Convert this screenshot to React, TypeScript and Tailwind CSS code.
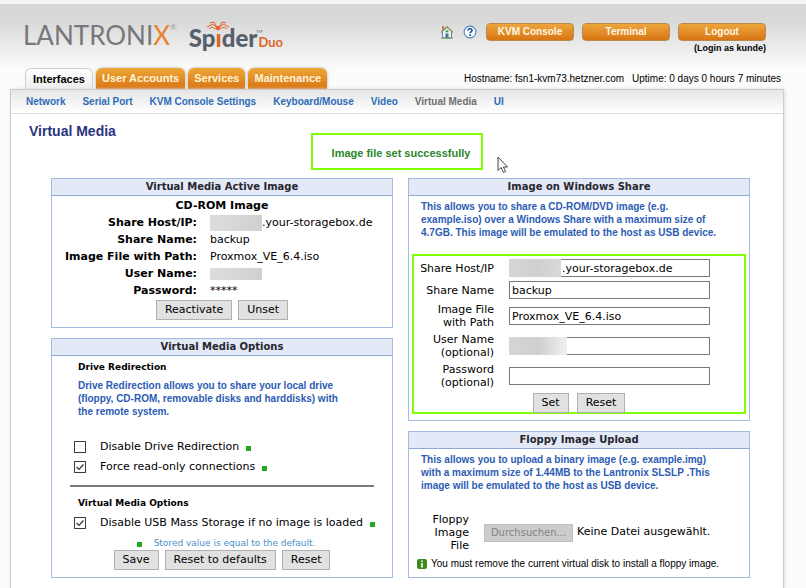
import type { ReactNode } from "react";

const verdana = "font-['DejaVu_Sans',Verdana,sans-serif]";
const arial = "font-['Liberation_Sans',Arial,sans-serif]";

function Logo() {
  return (
    <div className="flex items-start font-['Lato',sans-serif]">
      <div className="flex items-start text-[26px] leading-[34px] text-[#77787b]">
        <span>
          LANTRONI<span className="text-[#e8832a]">X</span>
        </span>
        <span className="text-[8px] leading-[18px] text-[#999999]">®</span>
      </div>
      <div className="relative ml-3 flex items-start pt-1">
        <span className="text-[24px] leading-8 font-black text-[#55606a]">
          Sp<span className="text-[#e2642a]">ı</span>der
        </span>
        <span className="-ml-px text-[4px] leading-[20px] text-[#55606a]">TM</span>
        <span className="-ml-1 pt-[13px] text-[13px] leading-[14px] font-bold text-[#e2642a]">Duo</span>
        <svg className="absolute top-[3px] left-[17px]" width="24" height="13" viewBox="0 0 24 13" fill="none" stroke="#e2642a" strokeWidth="1">
          <path d="M11 7 L7 3 L1 6 M11 7 L8 1 L4 2 M13 7 L17 3 L23 6 M13 7 L16 1 L20 2 M10 8 L6 6 L3 8 M14 8 L18 6 L21 8" />
          <ellipse cx="12" cy="7" rx="2" ry="2.5" fill="#e2642a" stroke="none" />
        </svg>
      </div>
    </div>
  );
}

function HomeIcon() {
  return (
    <svg width="14" height="14" viewBox="0 0 14 14" aria-hidden="true">
      <rect x="2" y="1" width="2" height="5" fill="#b08a5a" />
      <path d="M2.5 6.5 V13 H11.5 V6.5 L7 2.5 Z" fill="#eef3fa" stroke="#6f86a3" />
      <path d="M1 7.5 L7 1.5 L13 7.5" fill="none" stroke="#a08d5d" strokeWidth="1.2" />
      <rect x="5.7" y="5.3" width="2.6" height="2" fill="#3d9a4a" />
      <rect x="5.5" y="8.5" width="3" height="4.5" fill="#55708f" />
      <rect x="1" y="12.5" width="12" height="1" fill="#6d8f63" />
    </svg>
  );
}

function HelpIcon() {
  return (
    <svg width="14" height="14" viewBox="0 0 14 14" aria-hidden="true">
      <circle cx="7" cy="7" r="5.9" fill="#fff" stroke="#4e83bd" strokeWidth="1.1" />
      <path d="M5 5.6 C5 3.2 9 3.2 9 5.4 C9 6.9 7.1 6.8 7.1 8.3" fill="none" stroke="#1f4f96" strokeWidth="1.6" />
      <rect x="6.3" y="9.2" width="1.7" height="1.7" fill="#1f4f96" />
    </svg>
  );
}

function HeaderButton({ children }: { children: ReactNode }) {
  return (
    <button className="h-[18px] w-[88px] rounded border border-[#b88a4c] bg-gradient-to-b from-[#eda63a] to-[#d87512] text-[10px] leading-4 font-bold text-[#fff6e4]">
      {children}
    </button>
  );
}

function Tab({ children, active }: { children: ReactNode; active?: boolean }) {
  return (
    <a
      href="#"
      className={
        active
          ? "flex h-[22px] items-center rounded-t-md border-x border-t border-[#cfcfcf] bg-gradient-to-b from-white to-[#ececec] px-[7px] text-black"
          : "flex h-[21px] items-center rounded-t-md bg-gradient-to-b from-[#eca735] to-[#d97412] px-1.5 text-[#fff3dc] shadow-[0_0_3px_#aaaaaa]"
      }
    >
      {children}
    </a>
  );
}

function Panel({ title, children }: { title: string; children: ReactNode }) {
  return (
    <section className="border border-[#a3bbe0] bg-white">
      <h2 className={`border-b border-[#8ea9d4] bg-[#e4e9f7] text-center text-[10px] leading-4 font-bold text-[#26262e] ${verdana}`}>{title}</h2>
      {children}
    </section>
  );
}

function Hint({ children }: { children: ReactNode }) {
  return <p className={`text-[10px] leading-[13px] font-bold text-[#2c5cb4] ${arial}`}>{children}</p>;
}

function GreyButton({ children }: { children: ReactNode }) {
  return <button className="h-5 border border-[#b0b0b0] bg-[#e1e1e1] px-2 text-[11px] leading-4 text-black">{children}</button>;
}

function Dot() {
  return <span className="mt-0.5 inline-block size-[5px] bg-[#1fab1f]" />;
}

function Check({ id, label, checked }: { id: string; label: string; checked?: boolean }) {
  return (
    <div className="flex h-5 items-center">
      <span className="relative flex size-3">
        <input id={id} type="checkbox" defaultChecked={checked} className="peer size-3 appearance-none border border-[#3c3c3c] bg-white" />
        <svg className="pointer-events-none absolute inset-0 hidden peer-checked:block" width="12" height="12" viewBox="0 0 12 12" fill="none" stroke="#333333" strokeWidth="1.2">
          <path d="M2.5 6 L5 8.5 L9.5 3.5" />
        </svg>
      </span>
      <label htmlFor={id} className="mr-[7px] ml-3.5 text-[11px]">
        {label}
      </label>
      <Dot />
    </div>
  );
}

function InfoRow({ label, children }: { label: string; children: ReactNode }) {
  return (
    <tr>
      <th scope="row" className="w-[145px] p-0 text-right font-bold">
        {label}
      </th>
      <td className="py-0 pr-0 pl-[13px]">{children}</td>
    </tr>
  );
}

function Field({ id, label, value, masked, tall, type = "text" }: { id: string; label: ReactNode; value?: string; masked?: boolean; tall?: boolean; type?: string }) {
  return (
    <div className={`flex items-center ${tall ? "h-[30px]" : "h-[22px]"}`}>
      <label htmlFor={id} className="w-20 text-right text-[11px] leading-[13px]">
        {label}
      </label>
      <span className="relative mr-[34px] ml-[15px] flex flex-1">
        <input
          id={id}
          type={type}
          defaultValue={value}
          className={`h-[18px] w-full min-w-0 border border-[#7a7a7a] bg-white pr-1 text-[11px] text-black ${masked ? "pl-[52px]" : "pl-0.5"}`}
        />
        {masked && <span className={`absolute inset-y-0 left-0 bg-gradient-to-r from-[#d6d6d6] via-[#cfcfcf] ${value ? "w-[52px] to-[#d8d8d8]" : "w-[58px] to-[#f0f0f0]"}`} />}
      </span>
    </div>
  );
}

export default function App() {
  return (
    <div className={`min-h-screen overflow-hidden bg-[#fbfbfb] text-black ${arial}`}>
      <div className="h-1 bg-[#f6f6f6]" />
      <header className="bg-gradient-to-b from-[#d8d8d8] from-25% to-[#fbfbfb] pr-[40px] pl-[23px]">
        <div className="flex h-16 items-start justify-between">
          <div className="pt-[14px]">
            <Logo />
          </div>
          <div className="pt-[19px]">
            <div className="flex items-center">
              <a href="#" aria-label="Home">
                <HomeIcon />
              </a>
              <a href="#" aria-label="Help" className="mx-[9px]">
                <HelpIcon />
              </a>
              <div className="flex gap-2">
                <HeaderButton>KVM Console</HeaderButton>
                <HeaderButton>Terminal</HeaderButton>
                <HeaderButton>Logout</HeaderButton>
              </div>
            </div>
            <p className="text-right text-[9px] leading-[14px] font-bold">(Login as kunde)</p>
          </div>
        </div>
      </header>

      <div className="mr-[22px] ml-[10px]">
        <div className="flex items-end justify-between pr-[3px] pl-[15px]">
          <nav className="relative -mb-px flex items-start gap-[3px] text-[11px] font-bold">
            <Tab active>Interfaces</Tab>
            <Tab>User Accounts</Tab>
            <Tab>Services</Tab>
            <Tab>Maintenance</Tab>
          </nav>
          <p className="flex gap-2 text-[10px] leading-5">
            <span>Hostname: fsn1-kvm73.hetzner.com</span>
            <span>Uptime: 0 days 0 hours 7 minutes</span>
          </p>
        </div>

        <main className="relative min-h-[500px] border border-[#cccccc] bg-white shadow-[1px_0_3px_#dddddd]">
          <nav className="flex h-6 items-center gap-[17px] border-b border-[#dcdcdc] bg-gradient-to-b from-[#e6e6e6] to-white px-[15px] text-[10px] font-bold text-[#2d6cb8]">
            <a href="#">Network</a>
            <a href="#">Serial Port</a>
            <a href="#">KVM Console Settings</a>
            <a href="#">Keyboard/Mouse</a>
            <a href="#">Video</a>
            <a href="#" className="text-[#707070]">
              Virtual Media
            </a>
            <a href="#">UI</a>
          </nav>

          <h1 className="px-[18px] pt-2 text-[14px] leading-[18px] font-bold text-[#2a3580]">Virtual Media</h1>
          <div className="-mt-[7px] flex justify-center">
            <p className="flex h-[37px] w-[172px] items-center justify-center border-2 border-[#80ff00] pt-1 pl-2 text-[11px] font-bold text-[#2a852a]">
              Image file set successfully
            </p>
          </div>

          <div className={`mt-2 mr-[33px] ml-10 grid grid-cols-2 gap-[15px] text-[11px] ${verdana}`}>
            <div className="flex flex-col gap-2.5">
              <Panel title="Virtual Media Active Image">
                <table className="mt-px w-full border-collapse leading-[17px]">
                  <caption className="leading-[17px] font-bold">CD-ROM Image</caption>
                  <tbody>
                    <InfoRow label="Share Host/IP:">
                      <span className="flex items-center">
                        <span className="h-4 w-[52px] bg-gradient-to-r from-[#dddddd] to-[#d0d0d0]" />
                        .your-storagebox.de
                      </span>
                    </InfoRow>
                    <InfoRow label="Share Name:">backup</InfoRow>
                    <InfoRow label="Image File with Path:">Proxmox_VE_6.4.iso</InfoRow>
                    <InfoRow label="User Name:">
                      <span className="block h-3 w-[52px] bg-gradient-to-r from-[#dddddd] to-[#d0d0d0]" />
                    </InfoRow>
                    <InfoRow label="Password:">*****</InfoRow>
                  </tbody>
                </table>
                <div className="flex justify-center gap-1.5 pt-px pb-[7px]">
                  <GreyButton>Reactivate</GreyButton>
                  <GreyButton>Unset</GreyButton>
                </div>
              </Panel>

              <Panel title="Virtual Media Options">
                <div className="pr-[18px] pl-[26px]">
                  <h3 className="pt-1 text-[9px] leading-[14px] font-bold">Drive Redirection</h3>
                  <div className="pt-[5px] pr-5">
                    <Hint>Drive Redirection allows you to share your local drive (floppy, CD-ROM, removable disks and harddisks) with the remote system.</Hint>
                  </div>
                </div>
                <div className="pt-[19px] pl-[22px]">
                  <Check id="disable-redirection" label="Disable Drive Redirection" />
                  <Check id="read-only" label="Force read-only connections" checked />
                </div>
                <hr className="mt-2 mr-[18px] ml-[18px] border-t-2 border-[#7c7c7c]" />
                <h3 className="pt-[9px] pl-[26px] text-[9px] leading-[14px] font-bold">Virtual Media Options</h3>
                <div className="pt-[3px] pl-[22px]">
                  <Check id="disable-usb" label="Disable USB Mass Storage if no image is loaded" checked />
                </div>
                <p className="flex items-center justify-center gap-3 pt-[3px] pl-2 text-[9px] leading-[14px] text-[#4a90c8]">
                  <Dot />
                  Stored value is equal to the default.
                </p>
                <div className="flex justify-center gap-1.5 pb-[7px]">
                  <GreyButton>Save</GreyButton>
                  <GreyButton>Reset to defaults</GreyButton>
                  <GreyButton>Reset</GreyButton>
                </div>
              </Panel>
            </div>

            <div className="flex flex-col gap-2.5">
              <Panel title="Image on Windows Share">
                <div className="px-3 pt-1">
                  <Hint>This allows you to share a CD-ROM/DVD image (e.g. <br />example.iso) over a Windows Share with a maximum size of 4.7GB. This image will be emulated to the host as USB device.</Hint>
                </div>
                <form className="mx-[3px] mt-[15px] mb-[6px] h-40 border-2 border-[#80ff00] pt-px">
                  <Field id="host" label="Share Host/IP" value=".your-storagebox.de" masked />
                  <Field id="share" label="Share Name" value="backup" />
                  <Field id="path" label={<>Image File<br />with Path</>} value="Proxmox_VE_6.4.iso" tall />
                  <Field id="user" label={<>User Name<br />(optional)</>} masked tall />
                  <Field id="password" label={<>Password<br />(optional)</>} type="password" tall />
                  <div className="flex justify-center gap-2 pt-0.5">
                    <GreyButton>Set</GreyButton>
                    <GreyButton>Reset</GreyButton>
                  </div>
                </form>
              </Panel>

              <Panel title="Floppy Image Upload">
                <div className="px-3 pt-1">
                  <Hint>This allows you to upload a binary image (e.g. example.img) <br />with a maximum size of 1.44MB to the Lantronix SLSLP .This <br />image will be emulated to the host as USB device.</Hint>
                </div>
                <div className="flex items-center pt-[21px]">
                  <label htmlFor="floppy" className="w-[60px] pl-4 text-right leading-[13px]">
                    Floppy Image File
                  </label>
                  <button id="floppy" disabled className="mr-1 ml-[15px] h-[18px] w-[89px] border border-[#bfbfbf] bg-[#cccccc] text-[10px] leading-4 text-[#838383]">
                    Durchsuchen...
                  </button>
                  <span>Keine Datei ausgewählt.</span>
                </div>
                <p className={`flex items-center gap-1 pt-[5px] pb-1.5 pl-2 text-[10px] leading-[14px] ${arial}`}>
                  <svg width="10" height="10" viewBox="0 0 10 10" aria-hidden="true">
                    <rect width="10" height="10" rx="2" fill="#3c8a1e" />
                    <path d="M5 1.5 V3 M5 4 V8.5" stroke="#fff" strokeWidth="1.6" />
                  </svg>
                  You must remove the current virtual disk to install a floppy image.
                </p>
              </Panel>
            </div>
          </div>

          <svg className="pointer-events-none absolute top-[66px] left-[486px]" width="12" height="18" viewBox="0 0 12 18" aria-hidden="true">
            <path d="M1 1 V14.5 L4 11.5 L6.5 16.5 L8.5 15.5 L6.5 11 H10.5 Z" fill="#fff" stroke="#444444" />
          </svg>
        </main>
      </div>
    </div>
  );
}
